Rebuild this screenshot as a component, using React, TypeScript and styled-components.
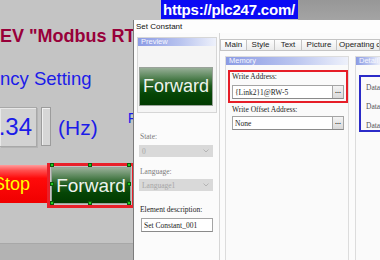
import React from "react";
import styled, { createGlobalStyle } from "styled-components";

const Global = createGlobalStyle`
  html, body { margin: 0; padding: 0; }
  body { width: 380px; height: 260px; overflow: hidden; background: #c4c4c4; }
  * { box-sizing: border-box; }
`;

const Stage = styled.div`
  position: relative;
  width: 380px;
  height: 260px;
  overflow: hidden;
  display: flex;
  flex-direction: column;
  background: #c4c4c4;
  font-family: "Liberation Sans", Arial, sans-serif;
`;

const TopStrip = styled.div`
  display: flex;
  height: 20px;
  flex-shrink: 0;
`;

const TopFill = styled.div<{ $dark?: boolean }>`
  flex: ${(p) => (p.$dark ? 1 : "0 0 161px")};
  background: ${(p) => (p.$dark ? "linear-gradient(#979797, #a4a4a4)" : "#c4c4c4")};
`;

const Banner = styled.div`
  height: 19px;
  width: 137px;
  background: #0a0af5;
  color: #ffffff;
  font-weight: bold;
  font-size: 15px;
  line-height: 19px;
  padding-left: 2px;
  white-space: nowrap;
  overflow: hidden;
  letter-spacing: -0.2px;
`;

const Canvas = styled.div`
  flex: 1;
  display: flex;
  flex-direction: column;
  padding-top: 6px;
  overflow: hidden;
`;

const Title = styled.div`
  font-size: 18px;
  font-weight: bold;
  line-height: 20px;
  color: #98003a;
  white-space: nowrap;
`;

const FreqLabel = styled.div`
  margin-top: 23px;
  font-size: 18.5px;
  line-height: 20px;
  color: #1c1ce8;
  white-space: nowrap;
`;

const Row = styled.div<{ $top: number; $h: number }>`
  display: flex;
  align-items: flex-start;
  margin-top: ${(p) => p.$top}px;
  height: ${(p) => p.$h}px;
  white-space: nowrap;
`;

const ValueBox = styled.div`
  width: 37px;
  height: 40px;
  background: #d2d2d2;
  border: 1px solid #a8a8a8;
  border-left: none;
  box-shadow: inset 1px 1px 0 #e8e8e8, 1px 1px 0 #b4b4b4;
  display: flex;
  justify-content: flex-end;
  overflow: hidden;
  padding-right: 4px;
  font-size: 24px;
  line-height: 38px;
  color: #1c1ce8;
`;

const Spinner = styled.div`
  margin-left: 4px;
  width: 10px;
  height: 39px;
  background: #d6d6d6;
  border: 1px solid #9c9c9c;
  box-shadow: inset 1px 1px 0 #f0f0f0;
`;

const BlueText = styled.div<{ $size: number; $left: number; $top: number }>`
  margin-left: ${(p) => p.$left}px;
  margin-top: ${(p) => p.$top}px;
  font-size: ${(p) => p.$size}px;
  line-height: ${(p) => Math.round(p.$size * 1.15)}px;
  color: #1c1ce8;
`;

const StopButton = styled.div`
  margin-top: 2px;
  width: 47px;
  height: 38px;
  background: linear-gradient(#ff9c9c 0%, #ff5050 14%, #ff0a0a 35%, #f00000 100%);
  display: flex;
  justify-content: flex-end;
  overflow: hidden;
  padding-right: 17px;
  font-size: 18px;
  line-height: 38px;
  color: #ffff00;
`;

const SelectFrame = styled.div`
  position: relative;
  width: 88px;
  height: 45px;
  border: 3px solid #e8202a;
  padding: 1px;
`;

const GreenButton = styled.div<{ $size: number }>`
  width: 100%;
  height: 100%;
  border: 1px solid #9aa29a;
  background: linear-gradient(#97ae97 0%, #5f8a5f 22%, #1c5a1c 48%, #064606 70%, #003a00 100%);
  color: #eef4ee;
  font-size: ${(p) => p.$size}px;
  display: flex;
  align-items: center;
  justify-content: center;
  white-space: nowrap;
  overflow: hidden;
`;

const Handle = styled.span`
  position: absolute;
  width: 4px;
  height: 4px;
  background: #22cc22;
  border: 1px solid #0a5a0a;
  transform: translate(-50%, -50%);
`;

const BottomStrip = styled.div`
  margin-top: auto;
  height: 17px;
  flex-shrink: 0;
  background: #b3b3b3;
  border-top: 1px solid #a8a8a8;
`;

/* ---------- dialog ---------- */

const Dialog = styled.div`
  position: absolute;
  left: 133px;
  top: 20px;
  right: 0;
  bottom: 0;
  background: #fbfbfb;
  border-left: 1px solid #7c7c7c;
  display: flex;
  flex-direction: column;
  font-family: "Liberation Sans", Arial, sans-serif;
`;

const TitleBar = styled.div`
  height: 13px;
  flex-shrink: 0;
  padding-left: 2px;
  font-size: 8px;
  line-height: 13px;
  color: #111;
  background: #fdfdfd;
`;

const Body = styled.div`
  flex: 1;
  display: flex;
  min-height: 0;
`;

const LeftCol = styled.div`
  width: 86px;
  flex-shrink: 0;
  border-right: 1px solid #d6d6d6;
  padding: 4px 0 0 3px;
  display: flex;
  flex-direction: column;
`;

const PreviewPanel = styled.div`
  width: 80px;
  height: 76px;
  border: 1px solid #d6d6d6;
  background: #f5f5f5;
  display: flex;
  flex-direction: column;
`;

const GroupHeader = styled.div`
  height: 8px;
  flex-shrink: 0;
  background: linear-gradient(to right, #8b9be4, #b9c4ef 55%, #eef1fb);
  color: #f6f7ff;
  font-size: 7.5px;
  line-height: 8px;
  padding-left: 3px;
  white-space: nowrap;
`;

const PreviewButtonWrap = styled.div`
  margin: 21px 0 0 1px;
  width: 74px;
  height: 39px;
`;

const Label = styled.div<{ $top: number; $left?: number; $dim?: boolean }>`
  margin-top: ${(p) => p.$top}px;
  margin-left: ${(p) => p.$left ?? 3}px;
  font-family: "Liberation Serif", "Times New Roman", serif;
  font-size: 7.5px;
  line-height: 10px;
  color: ${(p) => (p.$dim ? "#7a7a7a" : "#222")};
  white-space: nowrap;
`;

const Dropdown = styled.div<{ $top: number }>`
  margin-top: ${(p) => p.$top}px;
  margin-left: 2px;
  width: 74px;
  height: 12px;
  background: #d9d9d9;
  display: flex;
  align-items: center;
  justify-content: space-between;
  padding: 0 4px 0 3px;
  font-family: "Liberation Serif", "Times New Roman", serif;
  font-size: 7.5px;
  color: #a6a6a6;
`;

const TextField = styled.div<{ $top: number; $left: number; $w: number; $h?: number }>`
  margin-top: ${(p) => p.$top}px;
  margin-left: ${(p) => p.$left}px;
  width: ${(p) => p.$w}px;
  height: ${(p) => p.$h ?? 14}px;
  background: #ffffff;
  border: 1px solid #a4a4a4;
  border-bottom-color: #8a8a8a;
  display: flex;
  align-items: center;
  justify-content: space-between;
  padding-left: 2px;
  font-family: "Liberation Serif", "Times New Roman", serif;
  font-size: 7.5px;
  color: #222;
  white-space: nowrap;
`;

const DotsButton = styled.div`
  width: 11px;
  height: 12px;
  border-left: 1px solid #a6a6a6;
  background: linear-gradient(#f4f4f4, #d9d9d9);
  font-family: "Liberation Sans", Arial, sans-serif;
  font-size: 7px;
  font-weight: bold;
  line-height: 9px;
  text-align: center;
  color: #333;
`;

const RightCol = styled.div`
  flex: 1;
  display: flex;
  flex-direction: column;
  padding-top: 6px;
  min-width: 0;
`;

const TabBar = styled.div`
  display: flex;
  height: 12px;
  flex-shrink: 0;
  border-bottom: 1px solid #c6c6c6;
`;

const Tab = styled.div<{ $w?: number; $active?: boolean }>`
  flex: ${(p) => (p.$w ? `0 0 ${p.$w}px` : 1)};
  height: 12px;
  border: 1px solid #c4c4c4;
  border-left: ${(p) => (p.$active ? "1px solid #c4c4c4" : "none")};
  background: ${(p) => (p.$active ? "linear-gradient(#ffffff, #eef0f6)" : "linear-gradient(#fdfdfd, #ebebeb)")};
  font-size: 8px;
  line-height: 10px;
  text-align: center;
  color: #222;
  white-space: nowrap;
  overflow: hidden;
  padding: 0 2px;
`;

const Content = styled.div`
  flex: 1;
  display: flex;
  gap: 6px;
  padding: 5px 0 0 5px;
  min-height: 0;
`;

const GroupBox = styled.div<{ $w?: number }>`
  flex: ${(p) => (p.$w ? `0 0 ${p.$w}px` : 1)};
  border: 1px solid #dcdcdc;
  border-bottom: none;
  ${(p) => (p.$w ? "" : "border-right: none;")}
  display: flex;
  flex-direction: column;
  background: #fafafa;
  min-width: 0;
`;

const RedBox = styled.div`
  margin: 5px 0 0 2px;
  width: 120px;
  height: 33px;
  border: 2px solid #e61e28;
  padding: 0 2px;
  display: flex;
  flex-direction: column;
`;

const BlueBox = styled.div`
  margin: 10px 0 0 3px;
  height: 57px;
  border: 2px solid #2b2bc8;
  border-right: none;
  padding: 6px 0 0 5px;
  display: flex;
  flex-direction: column;
  gap: 9px;
  overflow: hidden;
`;

const DetailText = styled.div`
  font-family: "Liberation Serif", "Times New Roman", serif;
  font-size: 7.5px;
  line-height: 10px;
  color: #555;
  white-space: nowrap;
`;

const Chevron = () => (
  <svg width="6" height="4" viewBox="0 0 6 4">
    <path d="M0.5 0.5 L3 3 L5.5 0.5" fill="none" stroke="#b0b0b0" strokeWidth="0.9" />
  </svg>
);

const handles = [
  [2, -1], [40, -1], [79, -1],
  [2, 18], [79, 18],
  [2, 37], [40, 37], [79, 37],
];

export default function App() {
  return (
    <>
      <Global />
      <Stage>
        <TopStrip>
          <TopFill />
          <Banner>https://plc247.com/</Banner>
          <TopFill $dark />
        </TopStrip>
        <Canvas>
          <Title>EV "Modbus RTU"</Title>
          <FreqLabel>ncy Setting</FreqLabel>
          <Row $top={18} $h={40}>
            <ValueBox>2.34</ValueBox>
            <Spinner />
            <BlueText $size={21} $left={7} $top={9}>(Hz)</BlueText>
            <BlueText $size={15} $left={30} $top={2}>Frequency</BlueText>
          </Row>
          <Row $top={16} $h={45}>
            <StopButton>Stop</StopButton>
            <SelectFrame>
              <GreenButton $size={19}>Forward</GreenButton>
              {handles.map(([x, y], i) => (
                <Handle key={i} style={{ left: x, top: y }} />
              ))}
            </SelectFrame>
          </Row>
          <BottomStrip />
        </Canvas>

        <Dialog>
          <TitleBar>Set Constant</TitleBar>
          <Body>
            <LeftCol>
              <PreviewPanel>
                <GroupHeader>Preview</GroupHeader>
                <PreviewButtonWrap>
                  <GreenButton $size={18}>Forward</GreenButton>
                </PreviewButtonWrap>
              </PreviewPanel>
              <Label $top={19} $dim>State:</Label>
              <Dropdown $top={3}>
                <span>0</span>
                <Chevron />
              </Dropdown>
              <Label $top={10} $dim>Language:</Label>
              <Dropdown $top={2}>
                <span>Language1</span>
                <Chevron />
              </Dropdown>
              <Label $top={14}>Element description:</Label>
              <TextField $top={3} $left={4} $w={72}>Set Constant_001</TextField>
            </LeftCol>
            <RightCol>
              <TabBar>
                <Tab $w={27} $active>Main</Tab>
                <Tab $w={28}>Style</Tab>
                <Tab $w={27}>Text</Tab>
                <Tab $w={35}>Picture</Tab>
                <Tab>Operating conditions</Tab>
              </TabBar>
              <Content>
                <GroupBox $w={124}>
                  <GroupHeader>Memory</GroupHeader>
                  <RedBox>
                    <Label $top={0} $left={0}>Write Address:</Label>
                    <TextField $top={3} $left={0} $w={112}>
                      <span>{"{Link2}1@RW-5"}</span>
                      <DotsButton>...</DotsButton>
                    </TextField>
                  </RedBox>
                  <Label $top={2} $left={6}>Write Offset Address:</Label>
                  <TextField $top={1} $left={6} $w={112}>
                    <span>None</span>
                    <DotsButton>...</DotsButton>
                  </TextField>
                </GroupBox>
                <GroupBox>
                  <GroupHeader>Detail</GroupHeader>
                  <BlueBox>
                    <DetailText>Data type:</DetailText>
                    <DetailText>Data format:</DetailText>
                    <DetailText>Data length:</DetailText>
                  </BlueBox>
                </GroupBox>
              </Content>
            </RightCol>
          </Body>
        </Dialog>
      </Stage>
    </>
  );
}
